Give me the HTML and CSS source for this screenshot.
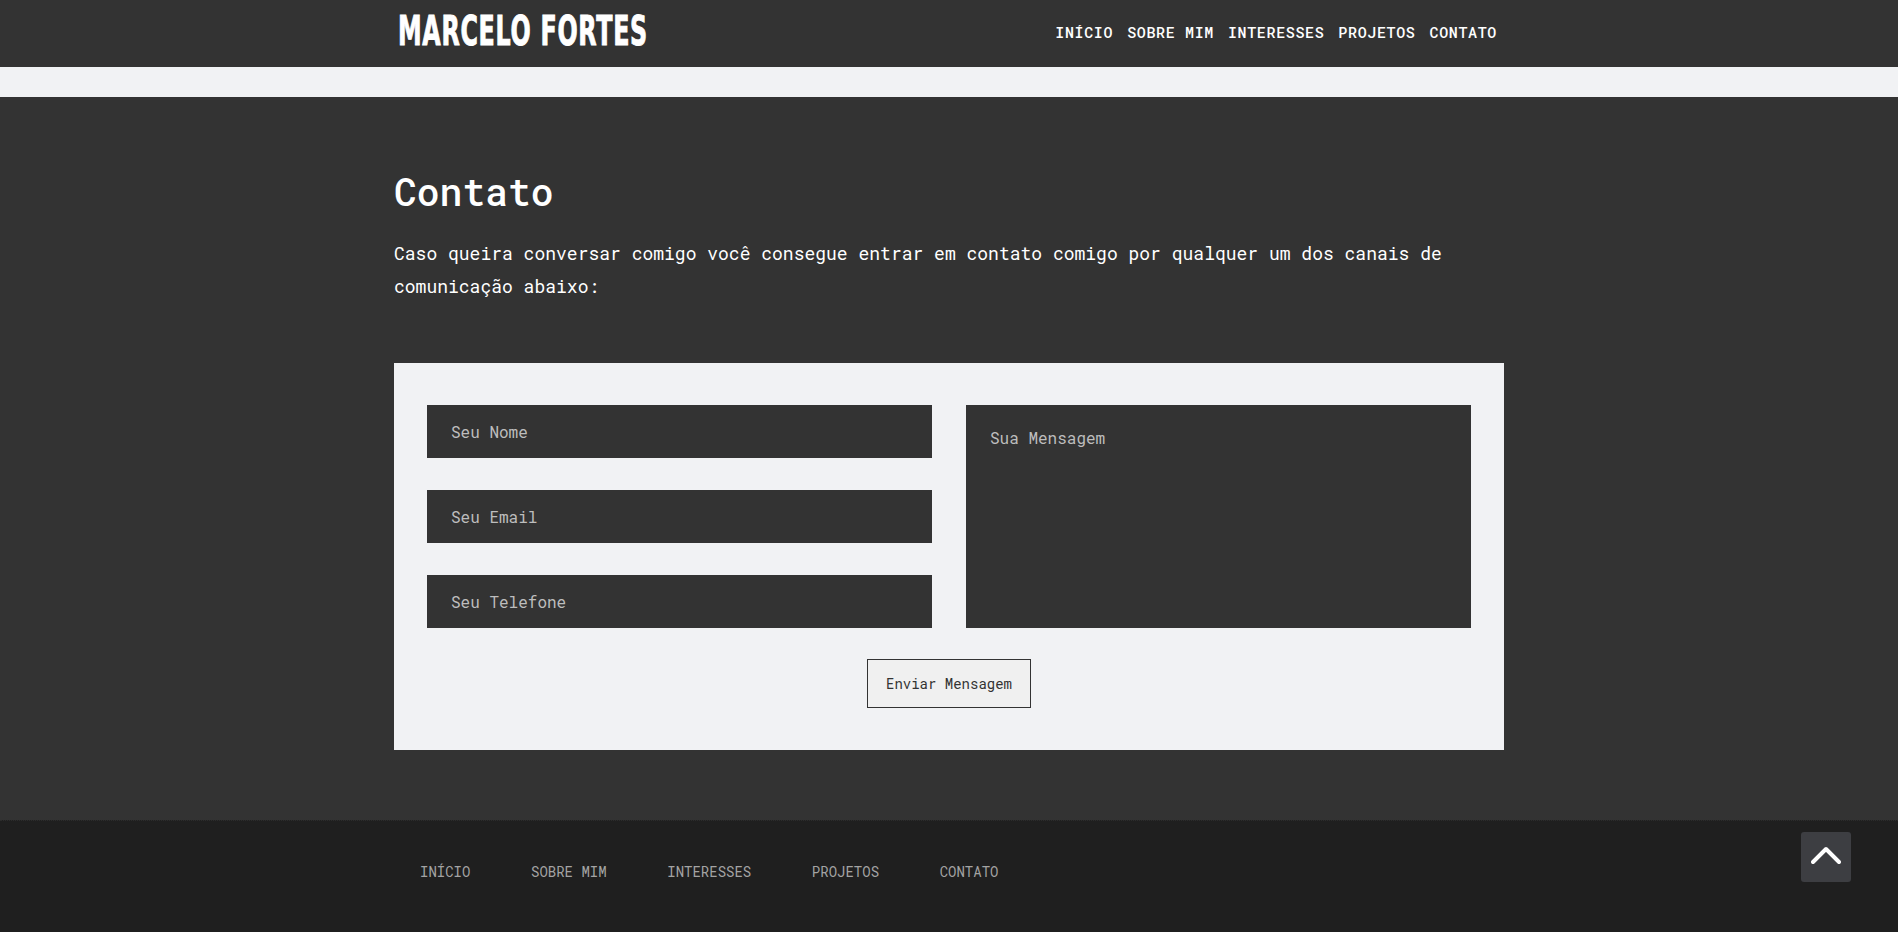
FILE: index.html
```html
<!DOCTYPE html>
<html lang="pt-BR">
<head>
<meta charset="utf-8">
<title>Marcelo Fortes - Contato</title>
<link rel="stylesheet" href="styles.css">
</head>
<body>
<header class="topbar">
  <div class="container topbar-inner">
    <a class="logo" href="#"><span class="logo-text">MARCELO FORTES</span></a>
    <nav class="menu">
      <a href="#">INÍCIO</a>
      <a href="#">SOBRE MIM</a>
      <a href="#">INTERESSES</a>
      <a href="#">PROJETOS</a>
      <a href="#">CONTATO</a>
    </nav>
  </div>
</header>
<div class="band"></div>
<section class="contact">
  <div class="container">
    <h2 class="contact-title">Contato</h2>
    <p class="contact-text">Caso queira conversar comigo você consegue entrar em contato comigo por qualquer um dos canais de comunicação abaixo:</p>
    <form class="contact-form">
      <div class="fields">
        <input class="field" type="text" placeholder="Seu Nome">
        <input class="field" type="email" placeholder="Seu Email">
        <input class="field" type="tel" placeholder="Seu Telefone">
      </div>
      <textarea class="message" placeholder="Sua Mensagem"></textarea>
      <div class="actions">
        <button class="send" type="submit">Enviar Mensagem</button>
      </div>
    </form>
  </div>
</section>
<footer class="footer">
  <div class="container">
    <nav class="footer-menu">
      <a href="#">INÍCIO</a>
      <a href="#">SOBRE MIM</a>
      <a href="#">INTERESSES</a>
      <a href="#">PROJETOS</a>
      <a href="#">CONTATO</a>
    </nav>
  </div>
</footer>
<a class="to-top" href="#" aria-label="Voltar ao topo">
  <svg width="30" height="20" viewBox="0 0 30 20"><path d="M2 16 L15 3 L28 16" fill="none" stroke="#fff" stroke-width="4" stroke-linecap="round" stroke-linejoin="round"/></svg>
</a>
</body>
</html>
```
FILE: styles.css
```css
* { box-sizing: border-box; }
html, body { margin: 0; padding: 0; }
body {
  font-family: "Roboto Mono", "DejaVu Sans Mono", "Liberation Mono", monospace;
  background: #1f1f1f;
  color: #fff;
}
a { text-decoration: none; }
.container {
  width: 1110px;
  margin: 0 auto;
}
.topbar {
  background: #333333;
  height: 67px;
}
.topbar-inner {
  height: 67px;
  display: flex;
  align-items: center;
  justify-content: space-between;
}
.logo {
  display: block;
  height: 41px;
  width: 250px;
  margin-bottom: 5px;
  color: #fff;
}
.logo-text {
  display: inline-block;
  font-family: "DejaVu Sans", "Liberation Sans", sans-serif;
  font-weight: bold;
  font-size: 41px;
  line-height: 41px;
  white-space: nowrap;
  letter-spacing: 1.2px;
  -webkit-text-stroke: 1px #fff;
  transform: scaleX(0.58);
  transform-origin: left center;
  margin-left: 4px;
}
.menu {
  display: flex;
  margin-bottom: 4px;
}
.menu a {
  color: #fff;
  font-size: 15px;
  font-weight: 500;
  line-height: 20px;
  letter-spacing: 0.64px;
  padding: 0 7px;
}
.band {
  height: 30px;
  background: #f1f2f4;
}
.contact {
  background: #333333;
  padding: 70px 0 70px;
}
.contact-title {
  margin: 0 0 22px;
  font-size: 38px;
  line-height: 48px;
  font-weight: 500;
  color: #fff;
}
.contact-text {
  margin: 0 0 60px;
  font-size: 18px;
  line-height: 33px;
  color: #fff;
}
.contact-form {
  background: #f1f2f4;
  padding: 42px 33px;
  display: grid;
  grid-template-columns: 1fr 1fr;
  column-gap: 34px;
}
.fields {
  display: flex;
  flex-direction: column;
  gap: 32px;
}
.field, .message {
  display: block;
  width: 100%;
  background: #333333;
  border: 0;
  border-radius: 0;
  color: #fff;
  font-family: inherit;
  font-size: 16px;
  outline: none;
}
.field {
  height: 53px;
  padding: 0 24px;
}
.message {
  height: 223px;
  padding: 21px 24px;
  line-height: 24px;
  resize: none;
}
.field::placeholder, .message::placeholder {
  color: #bdbdbd;
  opacity: 1;
}
.actions {
  grid-column: 1 / -1;
  display: flex;
  justify-content: center;
  margin-top: 31px;
}
.send {
  height: 49px;
  padding: 0 18px;
  background: #f0f0f0;
  border: 1px solid #333;
  color: #333;
  font-family: inherit;
  font-size: 14px;
  border-radius: 0;
}
.footer {
  background: #1f1f1f;
  border-top: 1px dotted #2c2c2c;
  padding: 41px 0 60px;
}
.footer-menu {
  display: flex;
  padding-left: 26px;
  gap: 60.6px;
}
.footer-menu a {
  color: #a3a3a3;
  font-size: 14px;
  line-height: 20px;
}
.to-top {
  position: fixed;
  right: 47px;
  bottom: 50px;
  width: 50px;
  height: 50px;
  background: #3d3e42;
  border-radius: 3px;
  display: flex;
  align-items: center;
  justify-content: center;
}
.to-top svg { display: block; margin-top: -2px; }
```
